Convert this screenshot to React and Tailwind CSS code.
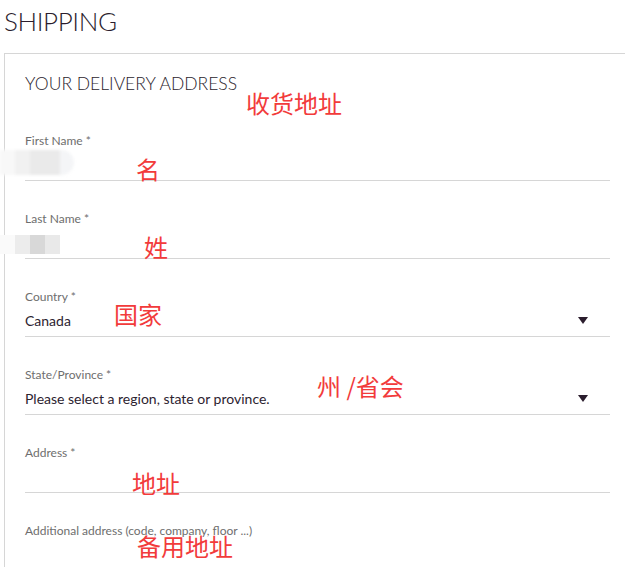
import React from 'react'

const fields = [
  { label: 'First Name *', value: '' },
  { label: 'Last Name *', value: '' },
  { label: 'Country *', value: 'Canada', select: true },
  { label: 'State/Province *', value: 'Please select a region, state or province.', select: true },
  { label: 'Address *', value: '' },
  { label: 'Additional address (code, company, floor ...)', value: '' },
]

// red notes drawn on top of the screenshot
const notes = [
  { text: '收货地址', cls: 'left-[246px] top-[91px]' },
  { text: '名', cls: 'left-[136px] top-[157px]' },
  { text: '姓', cls: 'left-[144px] top-[235px]' },
  { text: '国家', cls: 'left-[114px] top-[302px]' },
  { text: '州 /省会', cls: 'left-[317px] top-[374px]' },
  { text: '地址', cls: 'left-[132px] top-[471px]' },
  { text: '备用地址', cls: 'left-[137px] top-[534px]' },
]

function Arrow() {
  return (
    <svg width="10" height="7" viewBox="0 0 10 7" className="shrink-0">
      <polygon points="0,0 10,0 5,7" fill="#2b1d2d" />
    </svg>
  )
}

function Field({ label, value, select }) {
  return (
    <div>
      <div className="text-[12px] leading-[16px] text-[#6e6e6e]">{label}</div>
      <div className="h-[32px] flex items-center justify-between border-b border-[#d6d6d6] pr-[22px]">
        <span className="text-[14px] text-[#2d2330]">{value}</span>
        {select && <Arrow />}
      </div>
    </div>
  )
}

export default function App() {
  return (
    <div className="relative h-[567px] overflow-hidden bg-white font-['Lato','Liberation_Sans',sans-serif]">
      <h1 className="pl-[4px] pt-[5px] h-[53px] text-[26px] leading-[32px] font-light text-[#2b1d2d] tracking-[-0.4px]">
        SHIPPING
      </h1>

      <section className="ml-[4px] border-l border-t border-[#d6d6d6] pl-[20px] pr-[15px] pt-[18px]">
        <h2 className="text-[17.5px] leading-[24px] font-light text-[#2b1d2d] mb-[37px]">
          YOUR DELIVERY ADDRESS
        </h2>
        <div className="flex flex-col gap-[30px]">
          {fields.map((f) => (
            <Field key={f.label} {...f} />
          ))}
        </div>
      </section>

      {/* redacted values */}
      <div className="absolute left-0 top-[150px] h-[25px] w-[74px] flex blur-[1.5px]">
        <div className="w-[15px] bg-[#f8f8f8]" />
        <div className="w-[15px] bg-[#f1f1f1]" />
        <div className="w-[30px] bg-[#eaeaea]" />
        <div className="w-[14px] rounded-r-full bg-[#f4f5f7]" />
      </div>
      <div className="absolute left-0 top-[235px] h-[19px] w-[60px] flex">
        <div className="w-[15px] bg-[#fafafa]" />
        <div className="w-[15px] bg-[#ececec]" />
        <div className="w-[15px] bg-[#d8d8d8]" />
        <div className="w-[15px] bg-[#e9e9e9]" />
      </div>

      {notes.map((n) => (
        <span
          key={n.text}
          className={`absolute ${n.cls} text-[24px] leading-none text-[#f23b3b] font-['Noto_Sans_CJK_SC',sans-serif] whitespace-nowrap`}
        >
          {n.text}
        </span>
      ))}
    </div>
  )
}
